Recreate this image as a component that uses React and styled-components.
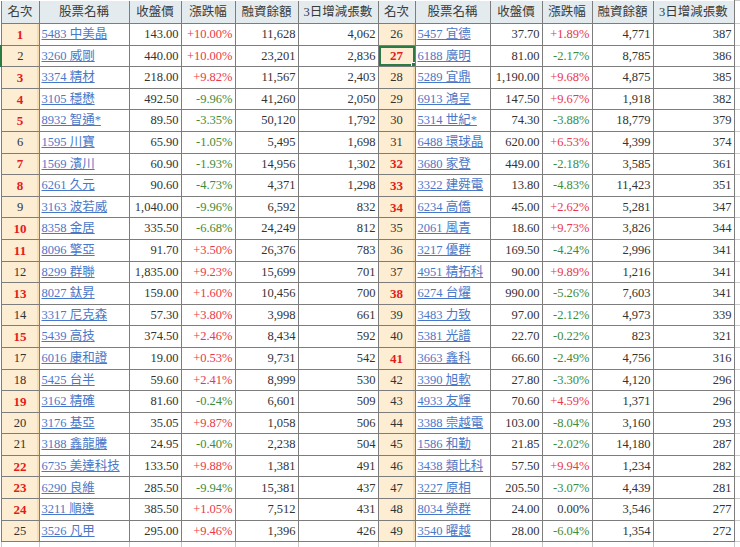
import React from "react";
import styled, { createGlobalStyle } from "styled-components";

const GlobalStyle = createGlobalStyle`
  html, body {
    margin: 0;
    padding: 0;
    background: #ffffff;
  }
`;

// [rank, stock, close, change%, margin balance, 3-day change, highlighted rank]
const leftRows = [
  [1, "5483 中美晶", "143.00", "+10.00%", "11,628", "4,062", true],
  [2, "3260 威剛", "440.00", "+10.00%", "23,201", "2,836", false],
  [3, "3374 精材", "218.00", "+9.82%", "11,567", "2,403", true],
  [4, "3105 穩懋", "492.50", "-9.96%", "41,260", "2,050", true],
  [5, "8932 智通*", "89.50", "-3.35%", "50,120", "1,792", true],
  [6, "1595 川寶", "65.90", "-1.05%", "5,495", "1,698", false],
  [7, "1569 濱川", "60.90", "-1.93%", "14,956", "1,302", true],
  [8, "6261 久元", "90.60", "-4.73%", "4,371", "1,298", true],
  [9, "3163 波若威", "1,040.00", "-9.96%", "6,592", "832", false],
  [10, "8358 金居", "335.50", "-6.68%", "24,249", "812", true],
  [11, "8096 擎亞", "91.70", "+3.50%", "26,376", "783", true],
  [12, "8299 群聯", "1,835.00", "+9.23%", "15,699", "701", false],
  [13, "8027 鈦昇", "159.00", "+1.60%", "10,456", "700", true],
  [14, "3317 尼克森", "57.30", "+3.80%", "3,998", "661", false],
  [15, "5439 高技", "374.50", "+2.46%", "8,434", "592", true],
  [17, "6016 康和證", "19.00", "+0.53%", "9,731", "542", false],
  [18, "5425 台半", "59.60", "+2.41%", "8,999", "530", false],
  [19, "3162 精確", "81.60", "-0.24%", "6,601", "509", true],
  [20, "3176 基亞", "35.05", "+9.87%", "1,058", "506", false],
  [21, "3188 鑫龍騰", "24.95", "-0.40%", "2,238", "504", false],
  [22, "6735 美達科技", "133.50", "+9.88%", "1,381", "491", true],
  [23, "6290 良維", "285.50", "-9.94%", "15,381", "437", true],
  [24, "3211 順達", "385.50", "+1.05%", "7,512", "431", true],
  [25, "3526 凡甲", "295.00", "+9.46%", "1,396", "426", false],
];

const rightRows = [
  [26, "5457 宜德", "37.70", "+1.89%", "4,771", "387", false],
  [27, "6188 廣明", "81.00", "-2.17%", "8,785", "386", true],
  [28, "5289 宜鼎", "1,190.00", "+9.68%", "4,875", "385", false],
  [29, "6913 鴻呈", "147.50", "+9.67%", "1,918", "382", false],
  [30, "5314 世紀*", "74.30", "-3.88%", "18,779", "379", false],
  [31, "6488 環球晶", "620.00", "+6.53%", "4,399", "374", false],
  [32, "3680 家登", "449.00", "-2.18%", "3,585", "361", true],
  [33, "3322 建舜電", "13.80", "-4.83%", "11,423", "351", true],
  [34, "6234 高僑", "45.00", "+2.62%", "5,281", "347", true],
  [35, "2061 風青", "18.60", "+9.73%", "3,826", "344", false],
  [36, "3217 優群", "169.50", "-4.24%", "2,996", "341", false],
  [37, "4951 精拓科", "90.00", "+9.89%", "1,216", "341", false],
  [38, "6274 台燿", "990.00", "-5.26%", "7,603", "341", true],
  [39, "3483 力致", "97.00", "-2.12%", "4,973", "339", false],
  [40, "5381 光譜", "22.70", "-0.22%", "823", "321", false],
  [41, "3663 鑫科", "66.60", "-2.49%", "4,756", "316", true],
  [42, "3390 旭軟", "27.80", "-3.30%", "4,120", "296", false],
  [43, "4933 友輝", "70.60", "+4.59%", "1,371", "296", false],
  [44, "3388 崇越電", "103.00", "-8.04%", "3,160", "293", false],
  [45, "1586 和勤", "21.85", "-2.02%", "14,180", "287", false],
  [46, "3438 類比科", "57.50", "+9.94%", "1,234", "282", false],
  [47, "3227 原相", "205.50", "-3.07%", "4,439", "281", false],
  [48, "8034 榮群", "24.00", "0.00%", "3,546", "277", false],
  [49, "3540 曜越", "28.00", "-6.04%", "1,354", "272", false],
];

const widths = [38, 90, 52, 54, 63, 80, 37, 75, 52, 50, 61, 81, 40];
const headers = ["名次", "股票名稱", "收盤價", "漲跌幅", "融資餘額", "3日增減張數"];

const trend = (pct) => (pct.startsWith("+") ? "up" : pct.startsWith("-") ? "down" : "flat");

function App() {
  return (
    <Sheet>
      <GlobalStyle />
      <Table>
        <colgroup>
          {widths.map((w, i) => (
            <col key={i} style={{ width: w }} />
          ))}
        </colgroup>
        <thead>
          <HeadRow>
            {[...headers, ...headers].map((h, i) => (
              <HeadCell key={i}>{h}</HeadCell>
            ))}
            <Blank />
          </HeadRow>
        </thead>
        <tbody>
          {leftRows.map((left, i) => (
            <Row key={left[0]}>
              <StockCells row={left} marked={i === 1} />
              <StockCells row={rightRows[i]} selected={rightRows[i][0] === 27} />
              <Blank />
            </Row>
          ))}
          <Row $short>
            {widths.map((w, i) => (
              <Blank key={i} />
            ))}
          </Row>
        </tbody>
      </Table>
    </Sheet>
  );
}

function StockCells({ row, marked, selected }) {
  const [rank, name, close, pct, margin, change, hot] = row;
  return (
    <>
      <RankCell $hot={hot} $marked={marked} $selected={selected}>
        {rank}
        {selected && <Handle />}
      </RankCell>
      <NameCell>
        <StockLink href="#">{name}</StockLink>
      </NameCell>
      <NumCell>{close}</NumCell>
      <NumCell $trend={trend(pct)}>{pct}</NumCell>
      <NumCell>{margin}</NumCell>
      <NumCell>{change}</NumCell>
    </>
  );
}

export default App;

const Sheet = styled.div`
  width: 740px;
  height: 547px;
  overflow: hidden;
  background: #fff;
`;

const Table = styled.table`
  border-collapse: collapse;
  table-layout: fixed;
  width: 773px;
  font-family: "Liberation Serif", "Noto Sans CJK TC", serif;
  font-size: 12.5px;
  color: #333;
`;

const HeadRow = styled.tr`
  height: 23px;
`;

const Row = styled.tr`
  height: ${(p) => (p.$short ? "12px" : "21.6px")};
`;

const cell = `
  border: 1px solid #7d7d7d;
  padding: 0 2px;
  white-space: nowrap;
  overflow: hidden;
  line-height: 1;
`;

const HeadCell = styled.th`
  ${cell}
  border-top: none;
  background: #e3ebee;
  font-weight: normal;
  text-align: center;
  color: #3a3a3a;
  font-size: 12.5px;
`;

const Blank = styled.td`
  ${cell}
  border-color: #c8c8c8;
`;

const RankCell = styled.td`
  ${cell}
  position: relative;
  text-align: center;
  background: #fdedd2;
  box-shadow: ${(p) =>
    p.$selected ? "inset 0 0 0 2px #2a7a45" : "inset -2px 0 0 #f6dcae"};
  border-left: ${(p) => (p.$marked ? "2px solid #2a7a45" : "1px solid #7d7d7d")};
  color: ${(p) => (p.$hot ? "#e41b1b" : "#333")};
  font-weight: ${(p) => (p.$hot ? "bold" : "normal")};
  font-size: ${(p) => (p.$hot ? "13px" : "12.5px")};
`;

const Handle = styled.span`
  position: absolute;
  right: -3px;
  bottom: -3px;
  width: 5px;
  height: 5px;
  background: #2a7a45;
  border: 1px solid #fff;
`;

const NameCell = styled.td`
  ${cell}
  text-align: left;
`;

const StockLink = styled.a`
  color: #4a78c8;
  text-decoration: underline;
  text-underline-offset: 1px;
`;

const NumCell = styled.td`
  ${cell}
  text-align: right;
  color: ${(p) =>
    p.$trend === "up" ? "#e8394a" : p.$trend === "down" ? "#3e8c3a" : "#333"};
`;
